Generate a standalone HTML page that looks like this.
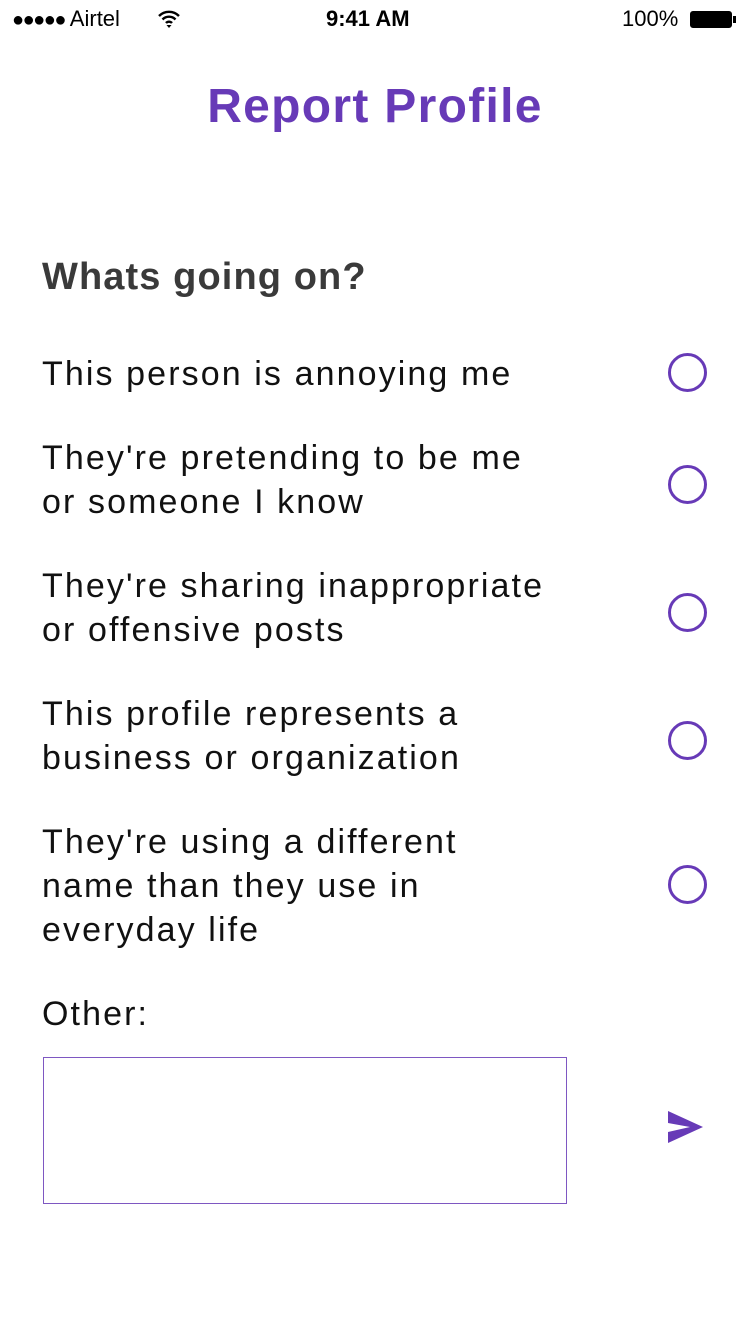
<!DOCTYPE html>
<html><head><meta charset="utf-8"><style>
body{margin:0;width:750px;height:1334px;background:#fff;font-family:"Liberation Sans",sans-serif;position:relative;overflow:hidden}
.a{position:absolute;white-space:nowrap}
.t{font-size:34px;color:#111;letter-spacing:2.1px;line-height:44px;left:42px}
.c{position:absolute;left:668px;width:33px;height:33px;border:3px solid #673ab7;border-radius:50%;box-sizing:content-box}
</style></head><body>
<div class="a" style="left:12px;top:6px;font-size:22px;color:#000"><span style="font-size:20px;letter-spacing:-1.5px">●●●●●</span> Airtel</div>
<svg class="a" style="left:157px;top:9px" width="24" height="20" viewBox="0 0 24 20"><path d="M2 7a14 14 0 0 1 20 0M5.5 10.5a9 9 0 0 1 13 0M9 14a4 4 0 0 1 6 0" stroke="#000" stroke-width="2.4" fill="none"/><path d="M12 19l-2.5-3h5z"/></svg>
<div class="a" style="left:326px;top:6px;font-size:22px;color:#000;font-weight:bold">9:41 AM</div>
<div class="a" style="left:622px;top:6px;font-size:22px;color:#000">100%</div>
<div class="a" style="left:690px;top:11px;width:42px;height:17px;border:2px solid #000;border-radius:3px;box-sizing:border-box;background:#000"></div>
<div class="a" style="left:733px;top:16px;width:3px;height:7px;background:#000"></div>
<div class="a" style="left:0;width:750px;text-align:center;top:79px;font-size:48px;font-weight:bold;color:#673ab7;letter-spacing:1.3px">Report Profile</div>
<div class="a" style="left:42px;top:256px;font-size:38px;font-weight:bold;color:#3a3a3a;letter-spacing:1.1px">Whats going on?</div>
<div class="a t" style="top:352px">This person is annoying me</div>
<div class="a t" style="top:436px">They're pretending to be me<br>or someone I know</div>
<div class="a t" style="top:564px">They're sharing inappropriate<br>or offensive posts</div>
<div class="a t" style="top:692px">This profile represents a<br>business or organization</div>
<div class="a t" style="top:820px">They're using a different<br>name than they use in<br>everyday life</div>
<div class="a t" style="top:992px">Other:</div>
<div class="c" style="top:353px"></div>
<div class="c" style="top:465px"></div>
<div class="c" style="top:593px"></div>
<div class="c" style="top:721px"></div>
<div class="c" style="top:865px"></div>
<div class="a" style="left:43px;top:1057px;width:524px;height:147px;border:1px solid #7e57c2;box-sizing:border-box"></div>
<svg class="a" style="left:668px;top:1111px" width="36" height="33" viewBox="0 0 36 33"><path d="M0 0L35 16L0 32V21L22 16L0 12Z" fill="#673ab7"/></svg>
</body></html>
